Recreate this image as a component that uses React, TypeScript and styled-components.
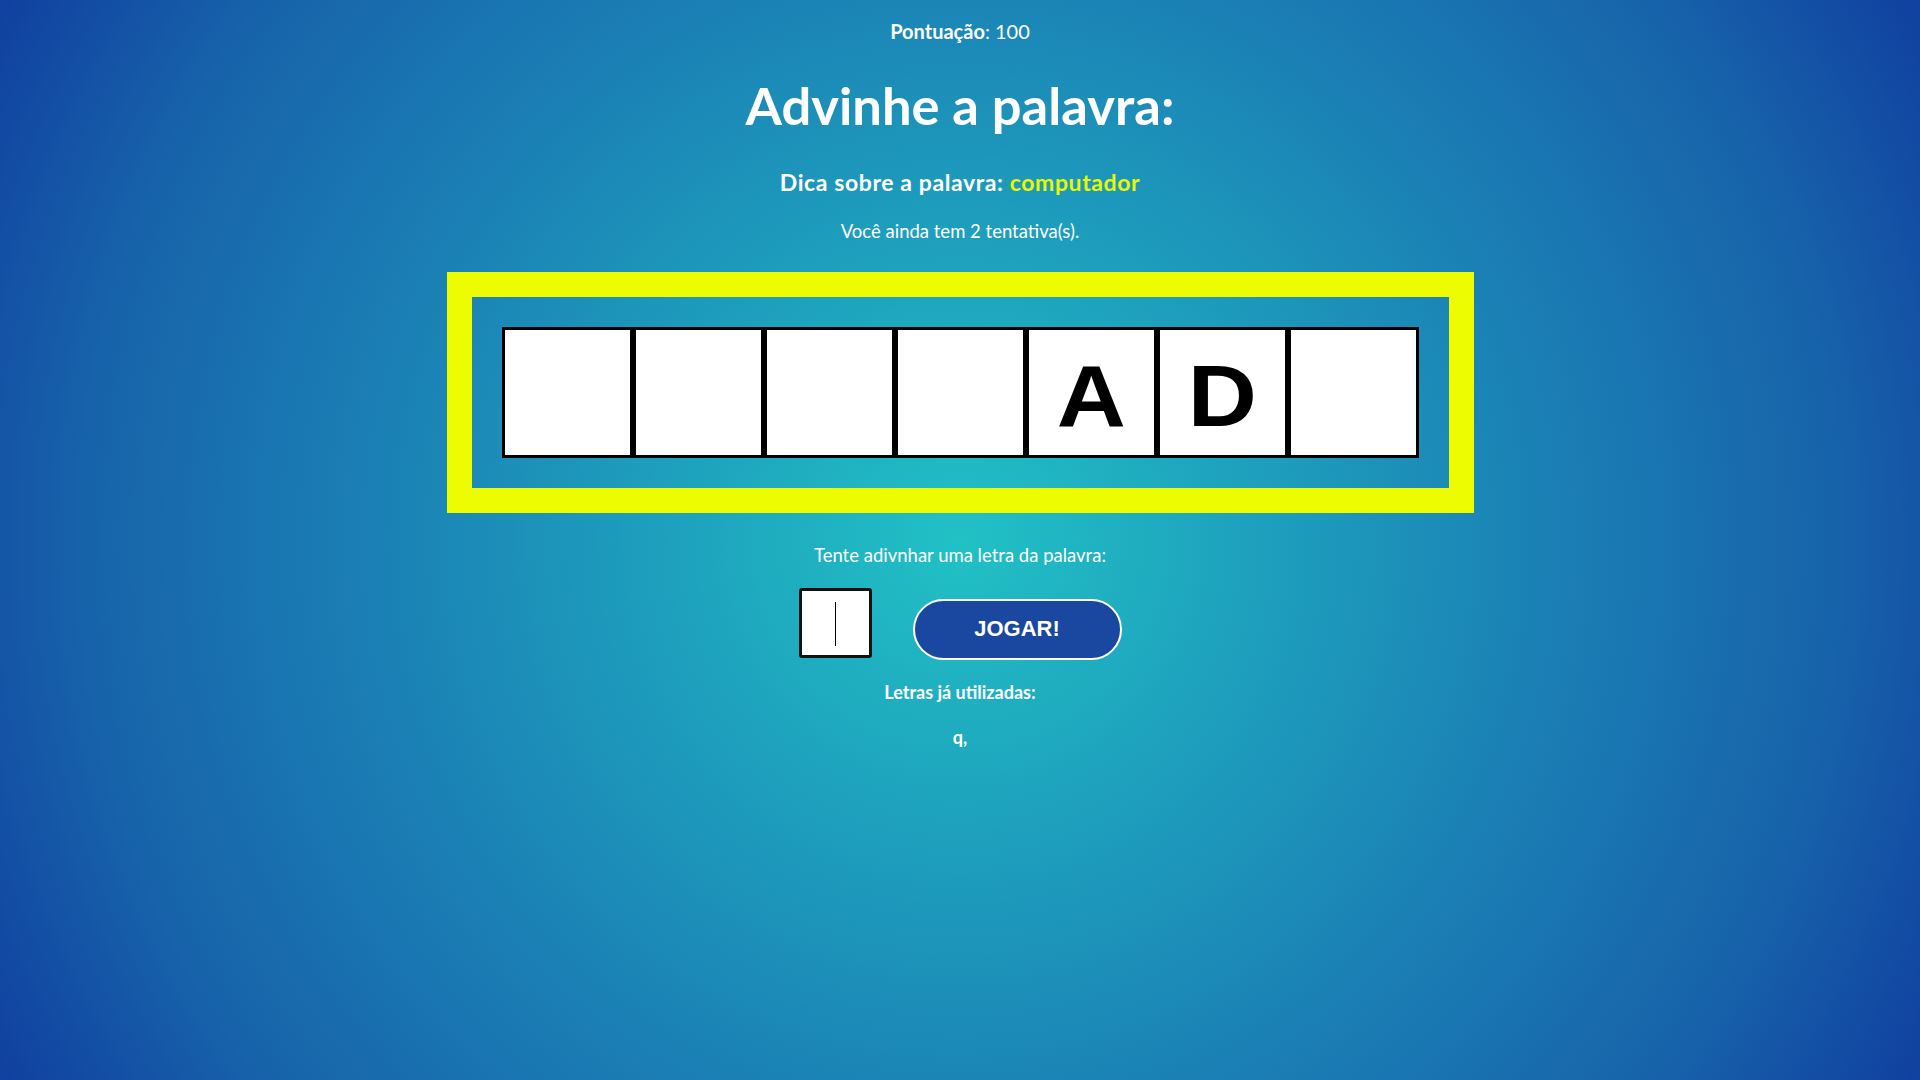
import styled, { createGlobalStyle } from 'styled-components'

const GlobalStyle = createGlobalStyle`
  html,
  body {
    margin: 0;
    padding: 0;
  }

  body {
    font-family: Lato, 'Open Sans', sans-serif;
    color: #ffffff;
  }
`

const Page = styled.main`
  align-items: center;
  background: radial-gradient(circle at 50% 50%, #21c1c5 0%, #1b84b6 50%, #1762aa 80%, #1040a0 100%);
  box-sizing: border-box;
  display: flex;
  flex-direction: column;
  min-height: 100vh;
  padding-top: 21px;
`

const Score = styled.p`
  font-size: 20px;
  line-height: 1;
  margin: 0;

  strong {
    font-weight: 700;
  }
`

const Title = styled.h1`
  font-size: 52.5px;
  font-weight: 700;
  line-height: 1;
  margin: 38px 0 0;
`

const Hint = styled.h2`
  font-size: 23px;
  font-weight: 700;
  letter-spacing: 0.6px;
  line-height: 1;
  margin: 39px 0 0;
`

const HintWord = styled.span`
  color: #e8f800;
`

const Text = styled.p<{ $gap: number; $bold?: boolean }>`
  font-size: ${(p) => (p.$bold ? 18 : 18.5)}px;
  font-weight: ${(p) => (p.$bold ? 700 : 400)};
  line-height: 1;
  margin: ${(p) => p.$gap}px 0 0;
`

const Board = styled.section`
  border: 25px solid #eefc00;
  display: flex;
  margin-top: 32px;
  padding: 30px;
`

const Cell = styled.div`
  align-items: center;
  background: #ffffff;
  border: 3px solid #000000;
  box-sizing: border-box;
  display: flex;
  height: 131px;
  justify-content: center;
  padding-top: 6px;
  width: 131px;
`

const Letter = styled.span`
  color: #000000;
  display: inline-block;
  font-family: 'Liberation Sans', Arial, sans-serif;
  font-size: 87px;
  font-weight: 700;
  line-height: 1;
  transform: scaleX(1.1);
`

const Controls = styled.form`
  align-items: flex-end;
  display: flex;
  gap: 41px;
  margin-top: 23px;
`

const InputBox = styled.div`
  margin-bottom: 2px;
  position: relative;

  &::after {
    background: #000000;
    content: '';
    height: 44px;
    left: 36px;
    position: absolute;
    top: 14px;
    width: 1px;
  }
`

const LetterInput = styled.input`
  background: #ffffff;
  border: 3px solid #111111;
  border-radius: 3px;
  box-sizing: border-box;
  display: block;
  font-family: 'Liberation Sans', Arial, sans-serif;
  font-size: 28px;
  height: 70px;
  outline: none;
  padding: 0;
  text-align: center;
  width: 73px;
`

const PlayButton = styled.button`
  background: #1a47a0;
  border: 2px solid #ffffff;
  border-radius: 31px;
  color: #ffffff;
  cursor: pointer;
  font-family: 'Liberation Sans', Arial, sans-serif;
  font-size: 22px;
  font-weight: 700;
  height: 61px;
  padding: 0;
  width: 209px;
`

const letters = ['', '', '', '', 'A', 'D', '']

export default function App() {
  return (
    <>
      <GlobalStyle />
      <Page>
        <Score>
          <strong>Pontuação</strong>: 100
        </Score>
        <Title>Advinhe a palavra:</Title>
        <Hint>
          Dica sobre a palavra: <HintWord>computador</HintWord>
        </Hint>
        <Text $gap={28}>Você ainda tem 2 tentativa(s).</Text>

        <Board>
          {letters.map((letter, i) => (
            <Cell key={i}>{letter && <Letter>{letter}</Letter>}</Cell>
          ))}
        </Board>

        <Text $gap={33}>Tente adivnhar uma letra da palavra:</Text>
        <Controls onSubmit={(e) => e.preventDefault()}>
          <InputBox>
            <LetterInput type="text" maxLength={1} aria-label="letra" />
          </InputBox>
          <PlayButton type="submit">JOGAR!</PlayButton>
        </Controls>
        <Text $gap={23} $bold>
          Letras já utilizadas:
        </Text>
        <Text $gap={27} $bold>
          q,
        </Text>
      </Page>
    </>
  )
}
